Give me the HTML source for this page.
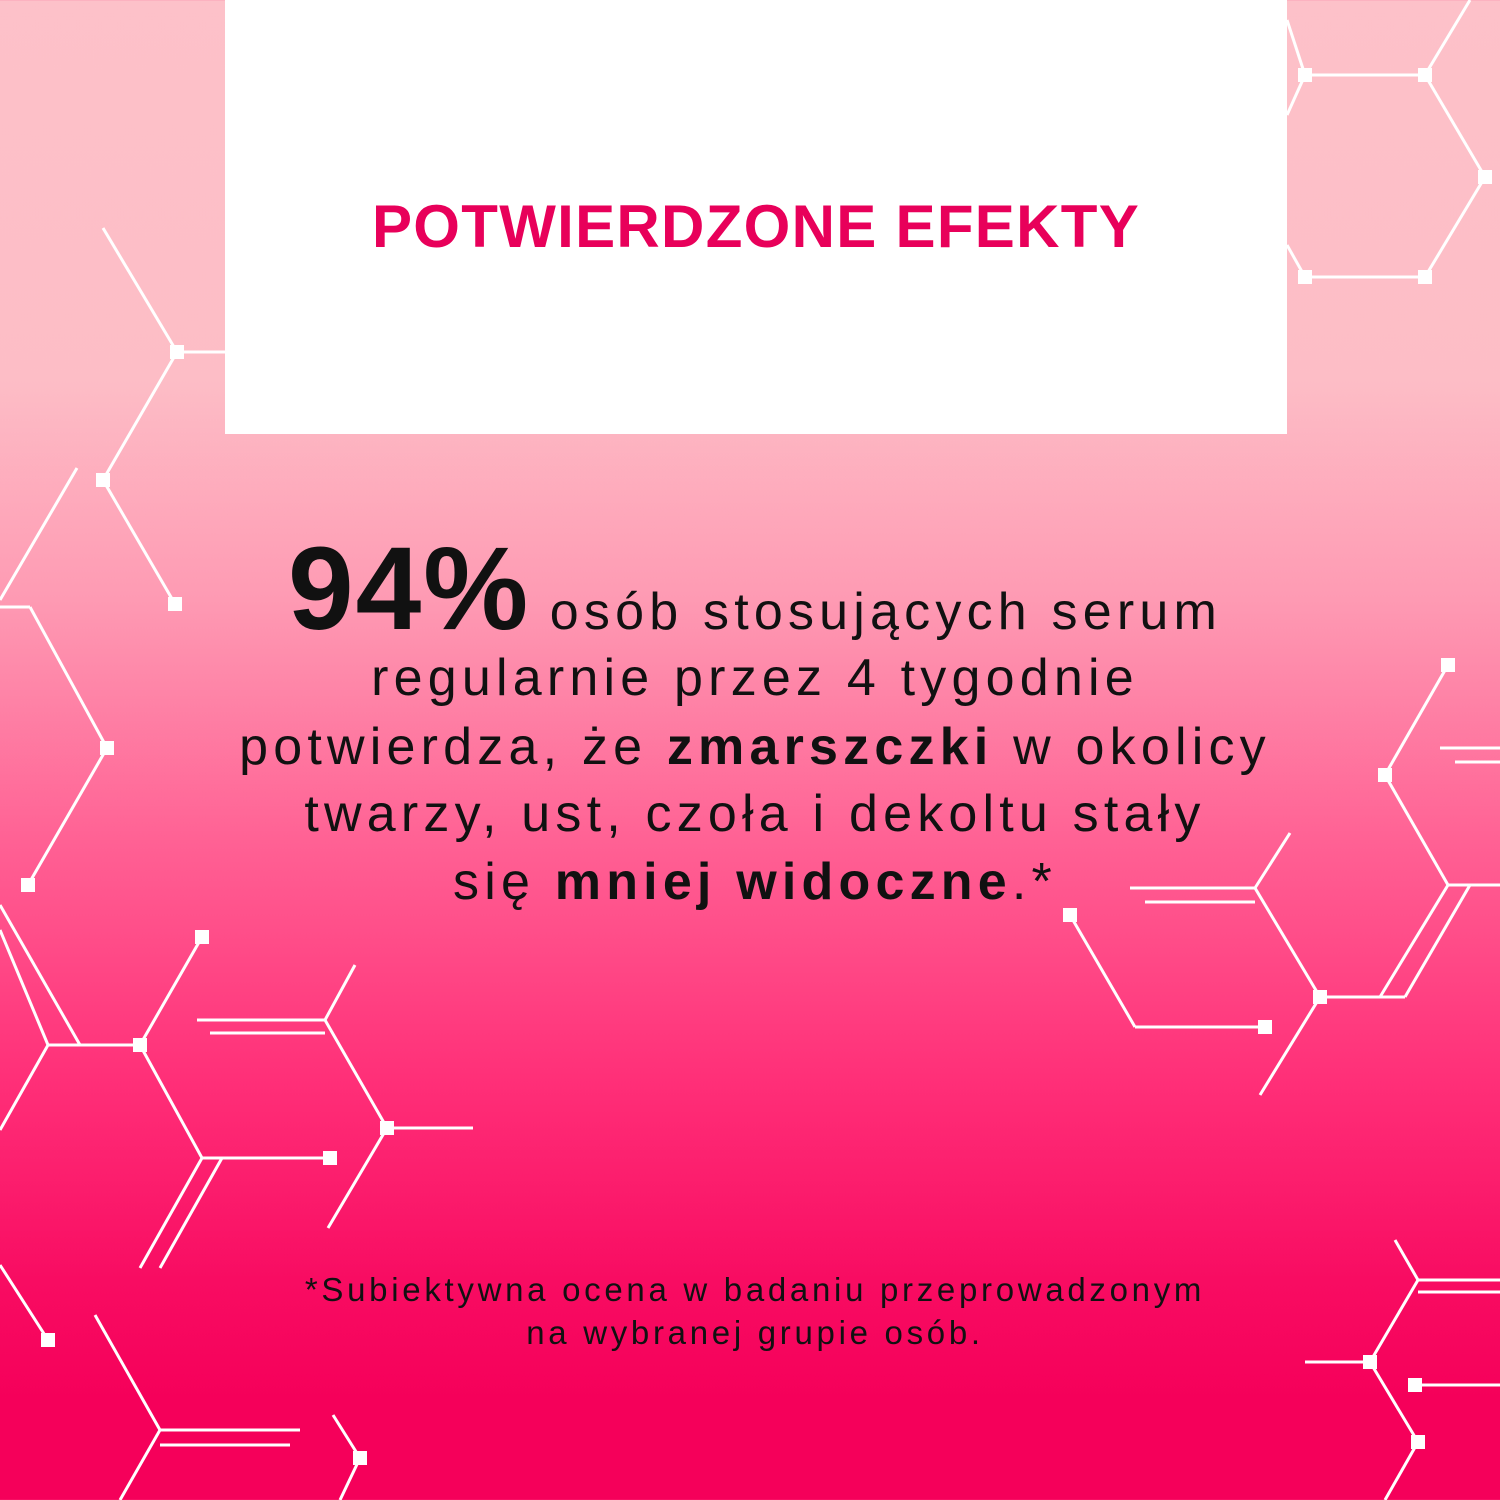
<!DOCTYPE html>
<html><head><meta charset="utf-8"><style>
html,body{margin:0;padding:0}
body{width:1500px;height:1500px;position:relative;overflow:hidden;font-family:"Liberation Sans",sans-serif;
background:linear-gradient(180deg,#fdc1c9 0px,#fdbdc6 380px,#fe9ab3 600px,#ff5f93 850px,#ff2f78 1080px,#f80c62 1280px,#f5005a 1400px,#f5005a 1500px);}
svg{position:absolute;left:0;top:0}
.box{position:absolute;left:225px;top:0;width:1062px;height:434px;background:#fff}
.title{position:absolute;left:225px;width:1062px;top:192px;text-align:center;color:#e8005a;font-weight:bold;font-size:60px;letter-spacing:1.3px}
.l{position:absolute;left:0;width:1510px;text-align:center;color:#111;font-size:52px;letter-spacing:5.2px;white-space:nowrap}
.l b{font-weight:bold}
.f{position:absolute;left:0;width:1510px;text-align:center;color:#111;font-size:33px;letter-spacing:3.7px}
</style></head><body>
<svg width="1500" height="1500" stroke="#fff" stroke-width="3" fill="#fff">
<g>
<line x1="103" y1="228" x2="177" y2="352"/><line x1="177" y1="352" x2="225" y2="352"/>
<line x1="177" y1="352" x2="103" y2="480"/><line x1="103" y1="480" x2="175" y2="604"/>
<line x1="77" y1="468" x2="0" y2="600"/><line x1="0" y1="607" x2="30" y2="607"/>
<line x1="30" y1="607" x2="107" y2="748"/><line x1="107" y1="748" x2="28" y2="885"/>
<line x1="0" y1="905" x2="80" y2="1045"/><line x1="0" y1="930" x2="48" y2="1045"/>
<line x1="48" y1="1045" x2="140" y2="1045"/><line x1="0" y1="1130" x2="48" y2="1045"/>
<line x1="140" y1="1045" x2="202" y2="937"/><line x1="140" y1="1045" x2="202" y2="1158"/>
<line x1="202" y1="1158" x2="330" y2="1158"/><line x1="202" y1="1158" x2="140" y2="1268"/>
<line x1="222" y1="1158" x2="160" y2="1268"/>
<line x1="197" y1="1020" x2="325" y2="1020"/><line x1="210" y1="1033" x2="325" y2="1033"/>
<line x1="325" y1="1020" x2="355" y2="965"/><line x1="325" y1="1020" x2="387" y2="1128"/>
<line x1="387" y1="1128" x2="473" y2="1128"/><line x1="387" y1="1128" x2="328" y2="1228"/>
<line x1="0" y1="1265" x2="48" y2="1340"/>
<line x1="95" y1="1315" x2="160" y2="1430"/><line x1="160" y1="1430" x2="300" y2="1430"/>
<line x1="160" y1="1445" x2="290" y2="1445"/><line x1="160" y1="1430" x2="120" y2="1500"/>
<line x1="333" y1="1415" x2="360" y2="1458"/><line x1="360" y1="1458" x2="340" y2="1500"/>

<line x1="1287" y1="20" x2="1305" y2="75"/><line x1="1305" y1="75" x2="1425" y2="75"/>
<line x1="1425" y1="75" x2="1470" y2="0"/><line x1="1425" y1="75" x2="1485" y2="177"/>
<line x1="1485" y1="177" x2="1425" y2="277"/><line x1="1425" y1="277" x2="1305" y2="277"/>
<line x1="1305" y1="277" x2="1287" y2="245"/><line x1="1287" y1="115" x2="1305" y2="75"/>
<line x1="1448" y1="665" x2="1385" y2="775"/><line x1="1440" y1="748" x2="1500" y2="748"/>
<line x1="1455" y1="762" x2="1500" y2="762"/>
<line x1="1385" y1="775" x2="1448" y2="885"/><line x1="1448" y1="885" x2="1500" y2="885"/>
<line x1="1448" y1="885" x2="1380" y2="997"/><line x1="1470" y1="885" x2="1405" y2="997"/>
<line x1="1130" y1="888" x2="1255" y2="888"/><line x1="1145" y1="902" x2="1255" y2="902"/>
<line x1="1255" y1="888" x2="1290" y2="833"/><line x1="1255" y1="888" x2="1320" y2="997"/>
<line x1="1320" y1="997" x2="1405" y2="997"/><line x1="1320" y1="997" x2="1260" y2="1095"/>
<line x1="1070" y1="915" x2="1135" y2="1027"/><line x1="1135" y1="1027" x2="1265" y2="1027"/>
<line x1="1395" y1="1240" x2="1418" y2="1280"/><line x1="1418" y1="1280" x2="1500" y2="1280"/>
<line x1="1418" y1="1292" x2="1500" y2="1292"/><line x1="1418" y1="1280" x2="1370" y2="1362"/>
<line x1="1305" y1="1362" x2="1370" y2="1362"/><line x1="1370" y1="1362" x2="1418" y2="1442"/>
<line x1="1410" y1="1385" x2="1500" y2="1385"/><line x1="1418" y1="1442" x2="1385" y2="1500"/>
</g>
<g stroke="none">
<rect x="170" y="345" width="14" height="14"/><rect x="96" y="473" width="14" height="14"/>
<rect x="168" y="597" width="14" height="14"/><rect x="100" y="741" width="14" height="14"/>
<rect x="21" y="878" width="14" height="14"/><rect x="195" y="930" width="14" height="14"/>
<rect x="133" y="1038" width="14" height="14"/><rect x="323" y="1151" width="14" height="14"/>
<rect x="380" y="1121" width="14" height="14"/><rect x="41" y="1333" width="14" height="14"/>
<rect x="353" y="1451" width="14" height="14"/>
<rect x="1298" y="68" width="14" height="14"/><rect x="1418" y="68" width="14" height="14"/>
<rect x="1478" y="170" width="14" height="14"/><rect x="1298" y="270" width="14" height="14"/>
<rect x="1418" y="270" width="14" height="14"/><rect x="1441" y="658" width="14" height="14"/>
<rect x="1378" y="768" width="14" height="14"/><rect x="1313" y="990" width="14" height="14"/>
<rect x="1063" y="908" width="14" height="14"/><rect x="1258" y="1020" width="14" height="14"/>
<rect x="1363" y="1355" width="14" height="14"/><rect x="1408" y="1378" width="14" height="14"/>
<rect x="1411" y="1435" width="14" height="14"/>
</g>
</svg>
<div class="box"></div>
<div class="title">POTWIERDZONE EFEKTY</div>
<div class="l" style="top:521px"><b style="font-size:118px;letter-spacing:2px">94%</b> osób stosujących serum</div>
<div class="l" style="top:648px">regularnie przez 4 tygodnie</div>
<div class="l" style="top:717px">potwierdza, że <b>zmarszczki</b> w okolicy</div>
<div class="l" style="top:784px">twarzy, ust, czoła i dekoltu stały</div>
<div class="l" style="top:852px">się <b>mniej widoczne</b>.*</div>
<div class="f" style="top:1271px">*Subiektywna ocena w badaniu przeprowadzonym</div>
<div class="f" style="top:1314px">na wybranej grupie osób.</div>
</body></html>
